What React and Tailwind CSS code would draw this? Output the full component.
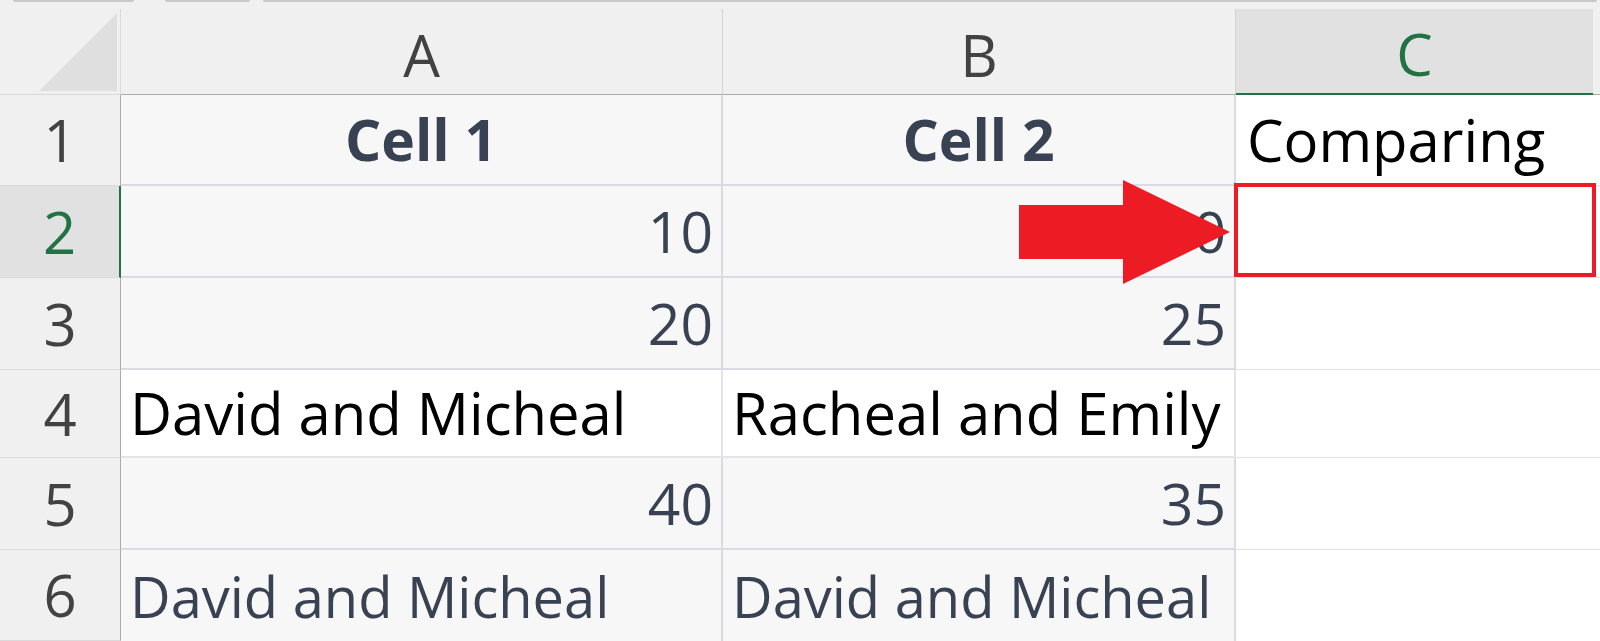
import React from 'react';

const rows = [
  { n: 1, h: 'h-[91px]', a: 'Cell 1', b: 'Cell 2', c: 'Comparing', kind: 'title' },
  { n: 2, h: 'h-[92px]', a: '10', b: '30', kind: 'num', active: true },
  { n: 3, h: 'h-[92px]', a: '20', b: '25', kind: 'num' },
  { n: 4, h: 'h-[88px]', a: 'David and Micheal', b: 'Racheal and Emily', kind: 'plain' },
  { n: 5, h: 'h-[92px]', a: '40', b: '35', kind: 'num' },
  { n: 6, h: 'h-[91px]', a: 'David and Micheal', b: 'David and Micheal', kind: 'text' },
];

function DataCell({ value, kind, width }) {
  if (kind === 'title') {
    return (
      <div className={`${width} flex items-center justify-center border-r-2 border-b-2 border-[#dadae4] bg-[#f7f7f7] text-[57px] font-bold text-[#394253]`}>
        {value}
      </div>
    );
  }
  if (kind === 'num') {
    return (
      <div className={`${width} flex items-center justify-end border-r-2 border-b-2 border-[#dadae4] bg-[#f7f7f7] pr-[8px] text-[57px] text-[#394253]`}>
        {value}
      </div>
    );
  }
  if (kind === 'plain') {
    return (
      <div className={`${width} flex items-center border-r-2 border-b-2 border-[#e4e4e8] bg-white pl-[9px] text-[58px] text-black whitespace-nowrap`}>
        {value}
      </div>
    );
  }
  return (
    <div className={`${width} flex items-center border-r-2 border-[#dadae4] bg-[#f7f7f7] pl-[9px] text-[56px] text-[#394253] whitespace-nowrap`}>
      {value}
    </div>
  );
}

export default function App() {
  return (
    <div
      className="relative h-[641px] w-[1600px] overflow-hidden bg-[#f0f0f0] leading-none"
      style={{ fontFamily: '"Open Sans", "Noto Sans", sans-serif' }}
    >
      {/* toolbar edge */}
      <div className="flex h-[9px] items-start">
        <div className="ml-[13px] h-[2px] w-[121px] rounded-b bg-[#c9c9c9]" />
        <div className="ml-[31px] h-[2px] w-[85px] rounded-b bg-[#c9c9c9]" />
        <div className="ml-[13px] h-[2px] w-[1334px] rounded-b bg-[#c9c9c9]" />
      </div>

      {/* column headers */}
      <div className="flex h-[86px] text-[58px] text-[#424242]">
        <div className="flex w-[121px] items-end justify-end border-r border-b border-[#d9d9d9] pr-[3px] pb-[3px]">
          <svg width="78" height="78" viewBox="0 0 78 78">
            <polygon points="0,78 78,0 78,78" fill="#dfdfdf" />
          </svg>
        </div>
        <div className="flex w-[602px] items-center justify-center border-r border-b border-r-[#d4d4d4] border-b-[#ababab] pt-[6px]">A</div>
        <div className="flex w-[513px] items-center justify-center border-r border-b border-r-[#d4d4d4] border-b-[#ababab] pt-[6px]">B</div>
        <div className="flex w-[357px] items-center justify-center border-b-2 border-[#217346] bg-[#e1e1e1] pt-[6px] text-[#217346]">C</div>
        <div className="flex-1 border-b border-[#ababab]" />
      </div>

      {/* rows */}
      {rows.map((r) => (
        <div key={r.n} className={`flex ${r.h}`}>
          <div
            className={
              r.active
                ? 'flex w-[121px] items-center justify-center border-r-2 border-b border-r-[#217346] border-b-[#dadada] bg-[#e1e1e1] text-[58px] text-[#217346]'
                : 'flex w-[121px] items-center justify-center border-r border-b border-r-[#ababab] border-b-[#dadada] text-[58px] text-[#424242]'
            }
          >
            {r.n}
          </div>
          <DataCell value={r.a} kind={r.kind} width="w-[602px]" />
          <DataCell value={r.b} kind={r.kind} width="w-[513px]" />
          <div className={`flex flex-1 items-center bg-white pl-[11px] text-[58px] text-black ${r.n < 6 ? 'border-b border-[#e1e1e1]' : ''}`}>
            {r.c}
          </div>
        </div>
      ))}

      {/* annotation: arrow and highlighted cell */}
      <svg className="absolute left-[1019px] top-[180px]" width="212" height="105" viewBox="0 0 212 105">
        <polygon points="0,25 104,25 104,0 211,52 104,104 104,79 0,79" fill="#ed1c24" />
      </svg>
      <div className="absolute left-[1234px] top-[183px] h-[94px] w-[362px] border-4 border-[#ed1c24]" />
    </div>
  );
}
